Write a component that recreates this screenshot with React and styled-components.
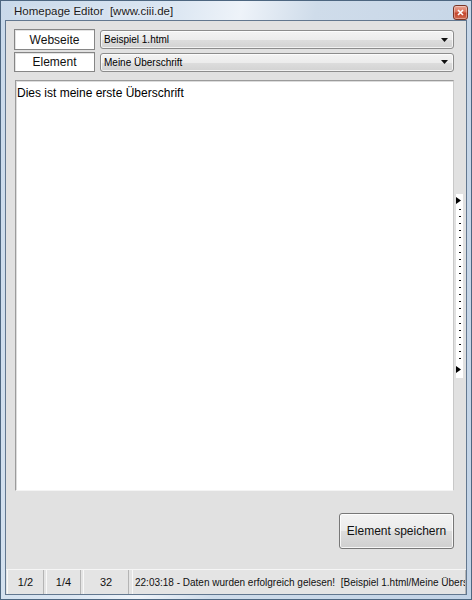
import React from "react";
import styled, { createGlobalStyle } from "styled-components";

const Global = createGlobalStyle`
  html, body { margin: 0; padding: 0; background: #ffffff; }
  * { box-sizing: border-box; }
`;

const Window = styled.div`
  width: 472px;
  height: 600px;
  display: flex;
  flex-direction: column;
  overflow: hidden;
  border: 1px solid #4d6680;
  background: linear-gradient(100deg, #c9d9ea 0%, #dbe6f2 30%, #eef3f9 42%, #cfdcea 55%, #c2d3e6 100%);
  font-family: "Liberation Sans", Arial, sans-serif;
  color: #000;
`;

const TitleBar = styled.div`
  height: 19px;
  flex: none;
  display: flex;
  align-items: flex-start;
  justify-content: space-between;
  padding-left: 13px;
  padding-right: 3px;
`;

const Title = styled.span`
  font-size: 11.5px;
  line-height: 12px;
  margin-top: 4px;
  color: #1b1b1b;
  white-space: pre;
  text-shadow: 0 0 4px rgba(255, 255, 255, 0.9);
`;

const CloseButton = styled.div`
  width: 15px;
  height: 15px;
  margin-top: 4px;
  border: 1px solid #7a3526;
  border-radius: 3px;
  background: linear-gradient(#eaa594 0%, #d9735c 45%, #c3442b 55%, #d26a4f 100%);
  display: flex;
  align-items: center;
  justify-content: center;
  box-shadow: inset 0 0 0 1px rgba(255, 255, 255, 0.35);
`;

const Frame = styled.div`
  flex: 1;
  min-height: 0;
  display: flex;
  padding: 0 4px 4px 4px;
`;

const Client = styled.div`
  flex: 1;
  min-width: 0;
  display: flex;
  flex-direction: column;
  border: 1px solid #62778f;
  background: #e1e1e1;
`;

const Form = styled.div`
  display: flex;
  flex-direction: column;
  gap: 2px;
  padding: 8px 12px 0 8px;
`;

const Row = styled.div`
  display: flex;
  align-items: center;
  gap: 5px;
  height: ${(p) => p.$h}px;
`;

const Label = styled.div`
  width: 81px;
  height: ${(p) => p.$h}px;
  flex: none;
  background: #ffffff;
  border: 1px solid #868686;
  box-shadow: inset 1px 1px 0 #e3e3e3;
  font-size: 12px;
  display: flex;
  align-items: center;
  justify-content: center;
  color: #111;
`;

const Select = styled.div`
  flex: 1;
  min-width: 0;
  height: 19px;
  border: 1px solid #8c8c8c;
  border-radius: 3px;
  background: linear-gradient(#f3f3f3 0%, #ececec 50%, #dddddd 51%, #d2d2d2 100%);
  box-shadow: inset 0 0 0 1px rgba(255, 255, 255, 0.7);
  display: flex;
  align-items: center;
  justify-content: space-between;
  padding: 0 5px 0 3px;
  font-size: 10px;
  color: #000;
`;

const EditorRow = styled.div`
  margin-top: 8px;
  height: 411px;
  display: flex;
  align-items: center;
  gap: 2px;
  padding: 0 3px 0 9px;
`;

const Editor = styled.div`
  flex: 1;
  min-width: 0;
  align-self: stretch;
  background: #ffffff;
  border: 1px solid #9b9b9b;
  border-right-color: #c8c8c8;
  border-bottom-color: #f4f4f4;
  box-shadow: inset 1px 1px 0 #dcdcdc;
  padding: 5px 1px;
  font-size: 12px;
  line-height: 14px;
  color: #000;
`;

const Ruler = styled.div`
  width: 7px;
  height: 184px;
  flex: none;
  background: #ffffff;
  display: flex;
`;

const Actions = styled.div`
  display: flex;
  justify-content: flex-end;
  padding: 22px 12px 0 0;
`;

const Button = styled.div`
  width: 115px;
  height: 36px;
  border: 1px solid #777777;
  border-radius: 3px;
  background: linear-gradient(#f3f3f3 0%, #ebebeb 50%, #dddddd 51%, #cfcfcf 100%);
  box-shadow: inset 0 0 0 1px rgba(255, 255, 255, 0.8);
  display: flex;
  align-items: center;
  justify-content: center;
  font-size: 12px;
  color: #111;
`;

const Spacer = styled.div`
  flex: 1;
`;

const StatusBar = styled.div`
  height: 25px;
  flex: none;
  display: flex;
  gap: 2px;
  padding-left: 1px;
  border-top: 1px solid #f6f6f6;
  background: #e4e4e4;
`;

const Panel = styled.div`
  width: ${(p) => (p.$w ? `${p.$w}px` : "auto")};
  flex: ${(p) => (p.$w ? "none" : "1")};
  min-width: 0;
  margin-left: ${(p) => p.$ml || 0}px;
  border-left: 1px solid #f8f8f8;
  border-right: 1px solid #b4b4b4;
  display: flex;
  align-items: center;
  justify-content: ${(p) => (p.$w ? "center" : "flex-start")};
  padding: ${(p) => (p.$w ? "0" : "0 0 0 2px")};
  font-size: ${(p) => (p.$w ? "11px" : "10px")};
  color: #111;
  white-space: pre;
  overflow: hidden;
`;

function Arrow() {
  return (
    <svg width="7" height="4" viewBox="0 0 7 4">
      <path d="M0 0h7L3.5 4z" fill="#111" />
    </svg>
  );
}

function RulerMarks() {
  const dashes = [];
  for (let i = 0; i < 22; i++) {
    dashes.push(<rect key={i} x="3" y={Math.round(15 + i * 7.1)} width="2" height="1" fill="#111" />);
  }
  return (
    <svg width="7" height="184" viewBox="0 0 7 184">
      <path d="M0 3L5 6.5L0 10z" fill="#000" />
      {dashes}
      <path d="M0 172L5 175.5L0 179z" fill="#000" />
    </svg>
  );
}

export default function App() {
  return (
    <>
      <Global />
      <Window>
        <TitleBar>
          <Title>{"Homepage Editor  [www.ciii.de]"}</Title>
          <CloseButton>
            <svg width="7" height="7" viewBox="0 0 7 7">
              <path d="M1 1L6 6M6 1L1 6" stroke="#ffffff" strokeWidth="1.6" />
            </svg>
          </CloseButton>
        </TitleBar>
        <Frame>
          <Client>
            <Form>
              <Row $h={21}>
                <Label $h={21}>Webseite</Label>
                <Select>
                  <span>Beispiel 1.html</span>
                  <Arrow />
                </Select>
              </Row>
              <Row $h={20}>
                <Label $h={20}>Element</Label>
                <Select>
                  <span>Meine Überschrift</span>
                  <Arrow />
                </Select>
              </Row>
            </Form>
            <EditorRow>
              <Editor>Dies ist meine erste Überschrift</Editor>
              <Ruler>
                <RulerMarks />
              </Ruler>
            </EditorRow>
            <Actions>
              <Button>Element speichern</Button>
            </Actions>
            <Spacer />
            <StatusBar>
              <Panel $w={37}>1/2</Panel>
              <Panel $w={35}>1/4</Panel>
              <Panel $w={46}>32</Panel>
              <Panel $ml={1}>{"22:03:18 - Daten wurden erfolgreich gelesen!  [Beispiel 1.html/Meine Überschrift]"}</Panel>
            </StatusBar>
          </Client>
        </Frame>
      </Window>
    </>
  );
}
